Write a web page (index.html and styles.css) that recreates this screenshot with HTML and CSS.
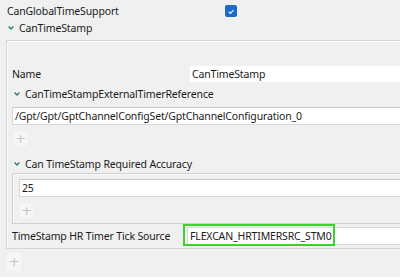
FILE: index.html
```
<!DOCTYPE html>
<html>
<head>
<meta charset="utf-8">
<link rel="stylesheet" href="styles.css">
</head>
<body>
<div class="page">
  <div class="top-row">
    <span class="label">CanGlobalTimeSupport</span>
    <span class="checkbox"><svg width="12" height="12" viewBox="0 0 12 12"><polyline points="4,7.2 5.4,8.4 8.2,5.4" fill="none" stroke="#fff" stroke-width="1.1" stroke-linecap="round" stroke-linejoin="round"/></svg></span>
  </div>
  <div class="head head-top">
    <svg class="chev" width="6" height="4" viewBox="0 0 6 4"><polyline points="0.6,0.6 3,3 5.4,0.6" fill="none" stroke="#22806e" stroke-width="1.4"/></svg>
    <span>CanTimeStamp</span>
  </div>
  <div class="group">
    <div class="field name-field">
      <span class="label field-label">Name</span>
      <div class="input input-plain">CanTimeStamp</div>
    </div>
    <div class="head head-sub">
      <svg class="chev" width="6" height="4" viewBox="0 0 6 4"><polyline points="0.6,0.6 3,3 5.4,0.6" fill="none" stroke="#22806e" stroke-width="1.4"/></svg>
      <span>CanTimeStampExternalTimerReference</span>
    </div>
    <div class="input input-ref">/Gpt/Gpt/GptChannelConfigSet/GptChannelConfiguration_0</div>
    <div class="add add-ref">+</div>
    <div class="head head-sub head-acc">
      <svg class="chev" width="6" height="4" viewBox="0 0 6 4"><polyline points="0.6,0.6 3,3 5.4,0.6" fill="none" stroke="#22806e" stroke-width="1.4"/></svg>
      <span>Can TimeStamp Required Accuracy</span>
    </div>
    <div class="subgroup">
      <div class="input input-acc">25</div>
      <div class="add add-acc">+</div>
    </div>
    <div class="field hr-field">
      <span class="label field-label">TimeStamp HR Timer Tick Source</span>
      <div class="input input-hr">FLEXCAN_HRTIMERSRC_STM0<span class="highlight"></span></div>
    </div>
  </div>
  <div class="add add-outer">+</div>
</div>
</body>
</html>
```

FILE: styles.css
```
html, body {
  margin: 0;
  padding: 0;
  background: #f0f0f0;
  overflow: hidden;
}
.page {
  width: 400px;
  height: 277px;
  overflow: hidden;
  font-family: "Noto Sans", "Open Sans", sans-serif;
  font-size: 10.5px;
  letter-spacing: -0.15px;
  color: #1b1b1b;
  padding-left: 6px;
  box-sizing: border-box;
}
.top-row {
  display: grid;
  grid-template-columns: 218px auto;
  align-items: center;
  height: 16px;
  padding-top: 3px;
  padding-left: 1px;
}
.label {
  line-height: 16px;
  white-space: nowrap;
}
.checkbox {
  width: 12px;
  height: 12px;
  border-radius: 2px;
  background: #1c6bc8;
  display: block;
  margin-top: -1px;
}
.checkbox svg { display: block; }
.head {
  display: flex;
  align-items: center;
  height: 16px;
  white-space: nowrap;
}
.chev {
  display: block;
  margin-right: 5px;
  flex: none;
}
.head-top {
  margin-top: 1px;
  padding-left: 2px;
}
.group {
  margin-top: 4px;
  width: 420px;
  border-top: 1px solid #d4d4d4;
  border-left: 1px solid #d4d4d4;
  border-bottom: 1px solid #d4d4d4;
  box-shadow: inset 1px 1px 0 #fafafa;
  padding: 24px 0 3px 5px;
}
.field {
  display: grid;
  grid-template-columns: 176px 1fr;
  align-items: center;
}
.input {
  background: #fff;
  height: 16px;
  line-height: 16px;
  padding-left: 2px;
  white-space: nowrap;
  border: 1px solid #d8d8d8;
  border-right: none;
  position: relative;
}
.input-plain {
  border-color: #f0f0f0;
  margin-left: 1px;
}
.name-field {
  height: 18px;
}
.head-sub {
  margin-top: 3px;
  padding-left: 2px;
}
.input-ref {
  margin-top: 5px;
  border-top-color: #c9c9c9;
}
.add {
  width: 13px;
  height: 15px;
  background: #f6f6f6;
  color: #c4c4c4;
  font-size: 13px;
  line-height: 15px;
  text-align: center;
  font-family: "DejaVu Sans", sans-serif;
}
.add-ref {
  margin-top: 6px;
  margin-left: 2px;
}
.head-acc {
  margin-top: 10px;
}
.subgroup {
  margin-top: 1px;
  border-top: 1px solid #d0d0d0;
  border-left: 1px solid #d0d0d0;
  border-bottom: 1px solid #d0d0d0;
  box-shadow: inset 1px 1px 0 #fafafa;
  padding: 5px 0 5px 6px;
}
.input-acc {
  border-top-color: #c9c9c9;
}
.add-acc {
  margin-top: 7px;
  margin-left: 1px;
  height: 14px;
  line-height: 14px;
}
.hr-field {
  margin-top: 3px;
}
.input-hr {
  margin-left: -1px;
}
.highlight {
  position: absolute;
  left: -5px;
  top: -4px;
  width: 148px;
  height: 18px;
  border: 2px solid #3dd12f;
}
.add-outer {
  margin-top: 4px;
  margin-left: 1px;
  width: 14px;
  height: 18px;
  line-height: 18px;
}
```
